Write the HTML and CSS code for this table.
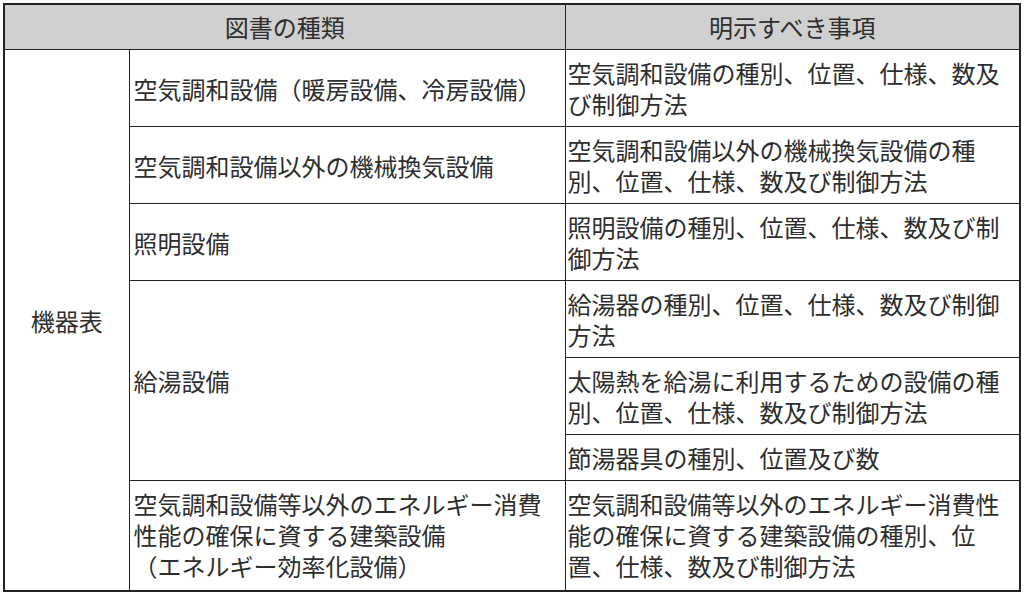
FILE: index.html
```html
<!DOCTYPE html>
<html lang="ja">
<head>
<meta charset="utf-8">
<link rel="stylesheet" href="styles.css">
</head>
<body>
<table class="spec">
  <colgroup>
    <col class="c1">
    <col class="c2">
    <col class="c3">
  </colgroup>
  <thead>
    <tr>
      <th colspan="2">図書の種類</th>
      <th>明示すべき事項</th>
    </tr>
  </thead>
  <tbody>
    <tr>
      <td rowspan="8" class="cat">機器表</td>
      <td class="kind">空気調和設備（暖房設備、冷房設備）</td>
      <td class="item">空気調和設備の種別、位置、仕様、数及び制御方法</td>
    </tr>
    <tr>
      <td class="kind">空気調和設備以外の機械換気設備</td>
      <td class="item">空気調和設備以外の機械換気設備の種別、位置、仕様、数及び制御方法</td>
    </tr>
    <tr>
      <td class="kind">照明設備</td>
      <td class="item">照明設備の種別、位置、仕様、数及び制御方法</td>
    </tr>
    <tr>
      <td class="kind" rowspan="3">給湯設備</td>
      <td class="item">給湯器の種別、位置、仕様、数及び制御方法</td>
    </tr>
    <tr>
      <td class="item">太陽熱を給湯に利用するための設備の種別、位置、仕様、数及び制御方法</td>
    </tr>
    <tr>
      <td class="item">節湯器具の種別、位置及び数</td>
    </tr>
    <tr>
      <td class="kind last">空気調和設備等以外のエネルギー消費性能の確保に資する建築設備<br>（エネルギー効率化設備）</td>
      <td class="item last">空気調和設備等以外のエネルギー消費性能の確保に資する建築設備の種別、位置、仕様、数及び制御方法</td>
    </tr>
  </tbody>
</table>
</body>
</html>
```

FILE: styles.css
```css
html, body {
  margin: 0;
  padding: 0;
  background: #ffffff;
}
body {
  padding: 3px 0 0 3px;
  font-family: "Noto Sans CJK JP", "Noto Sans", sans-serif;
  color: #2e2e2e;
}
.spec {
  border-collapse: collapse;
  table-layout: fixed;
  width: 1016px;
  border: 2px solid #222222;
  font-size: 24px;
  line-height: 31px;
}
.c1 { width: 125px; }
.c2 { width: 436px; }
.c3 { width: 455px; }
.spec th,
.spec td {
  border: 1px solid #222222;
  padding: 7px 2px 7px 2px;
  vertical-align: middle;
  text-align: left;
  font-weight: normal;
}
.spec th {
  background: #d0d0d0;
  text-align: center;
  padding: 6px 2px 7px 2px;
}
.spec td.cat {
  text-align: center;
}
.spec td.kind {
  padding-left: 4px;
}
.spec td.last {
  padding-bottom: 9px;
}
```
